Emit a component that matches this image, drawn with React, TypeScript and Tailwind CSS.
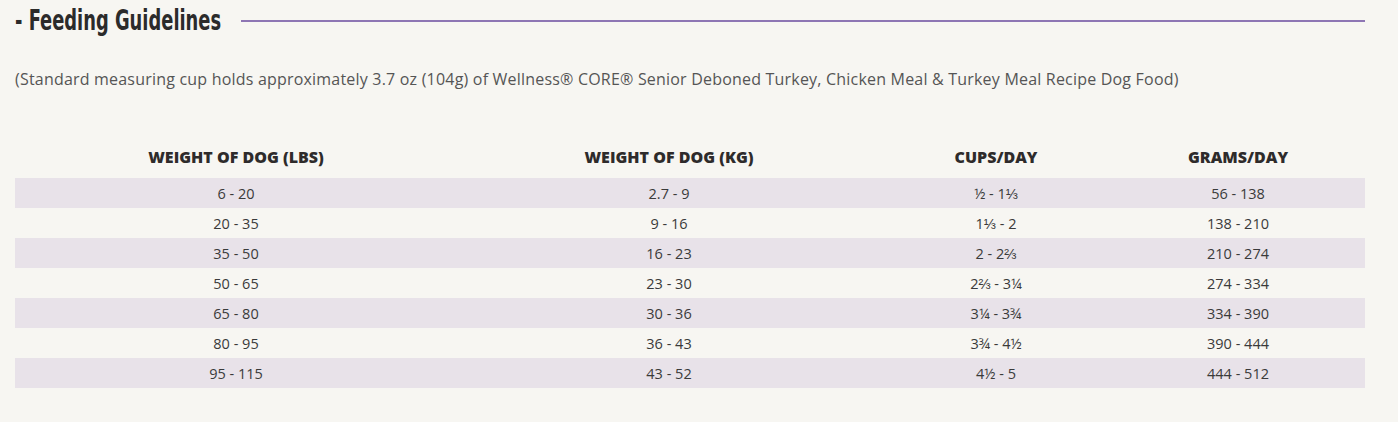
const rows: [string, string, string, string][] = [
  ['6 - 20', '2.7 - 9', '½ - 1⅓', '56 - 138'],
  ['20 - 35', '9 - 16', '1⅓ - 2', '138 - 210'],
  ['35 - 50', '16 - 23', '2 - 2⅔', '210 - 274'],
  ['50 - 65', '23 - 30', '2⅔ - 3¼', '274 - 334'],
  ['65 - 80', '30 - 36', '3¼ - 3¾', '334 - 390'],
  ['80 - 95', '36 - 43', '3¾ - 4½', '390 - 444'],
  ['95 - 115', '43 - 52', '4½ - 5', '444 - 512'],
];

const headers = ['WEIGHT OF DOG (LBS)', 'WEIGHT OF DOG (KG)', 'CUPS/DAY', 'GRAMS/DAY'];

export default function App() {
  return (
    <div className="w-[1398px] h-[422px] bg-[#f7f6f2] overflow-hidden">
      <div className="pl-[15px] pr-[33px]">
        {/* title + rule */}
        <div className="flex items-center h-[41px]">
          <div className="w-[206px] shrink-0 overflow-visible">
            <h2 className="origin-left scale-x-[0.685] font-['DejaVu_Sans',sans-serif] font-stretch-condensed font-bold text-[29px] leading-none text-[#2b2b2b] whitespace-nowrap">
              - Feeding Guidelines
            </h2>
          </div>
          <div className="flex-1 ml-[20px] h-[2px] bg-[#8e76b4]" />
        </div>

        <p className="mt-[27px] font-['Open_Sans',sans-serif] text-[16px] leading-[22px] text-[#555555] tracking-[0.2px]">
          (Standard measuring cup holds approximately 3.7 oz (104g) of Wellness® CORE® Senior Deboned Turkey, Chicken Meal &amp; Turkey Meal Recipe Dog Food)
        </p>

        <table className="mt-[47px] w-[1350px] border-collapse table-fixed">
          <colgroup>
            <col className="w-[442px]" />
            <col className="w-[424px]" />
            <col className="w-[230px]" />
            <col className="w-[254px]" />
          </colgroup>
          <thead>
            <tr className="h-[41px]">
              {headers.map((h) => (
                <th
                  key={h}
                  className="text-center align-top pt-[8px] font-['Open_Sans',sans-serif] font-extrabold text-[16px] text-[#2e2b2b]"
                >
                  {h}
                </th>
              ))}
            </tr>
          </thead>
          <tbody>
            {rows.map((r, i) => (
              <tr key={i} className={i % 2 === 0 ? 'h-[30px] bg-[#e8e2e9]' : 'h-[30px]'}>
                {r.map((c, j) => (
                  <td
                    key={j}
                    className="text-center p-0 pt-[2px] font-['Open_Sans',sans-serif] text-[14.5px] text-[#3a3a3a]"
                  >
                    {c}
                  </td>
                ))}
              </tr>
            ))}
          </tbody>
        </table>
      </div>
    </div>
  );
}
